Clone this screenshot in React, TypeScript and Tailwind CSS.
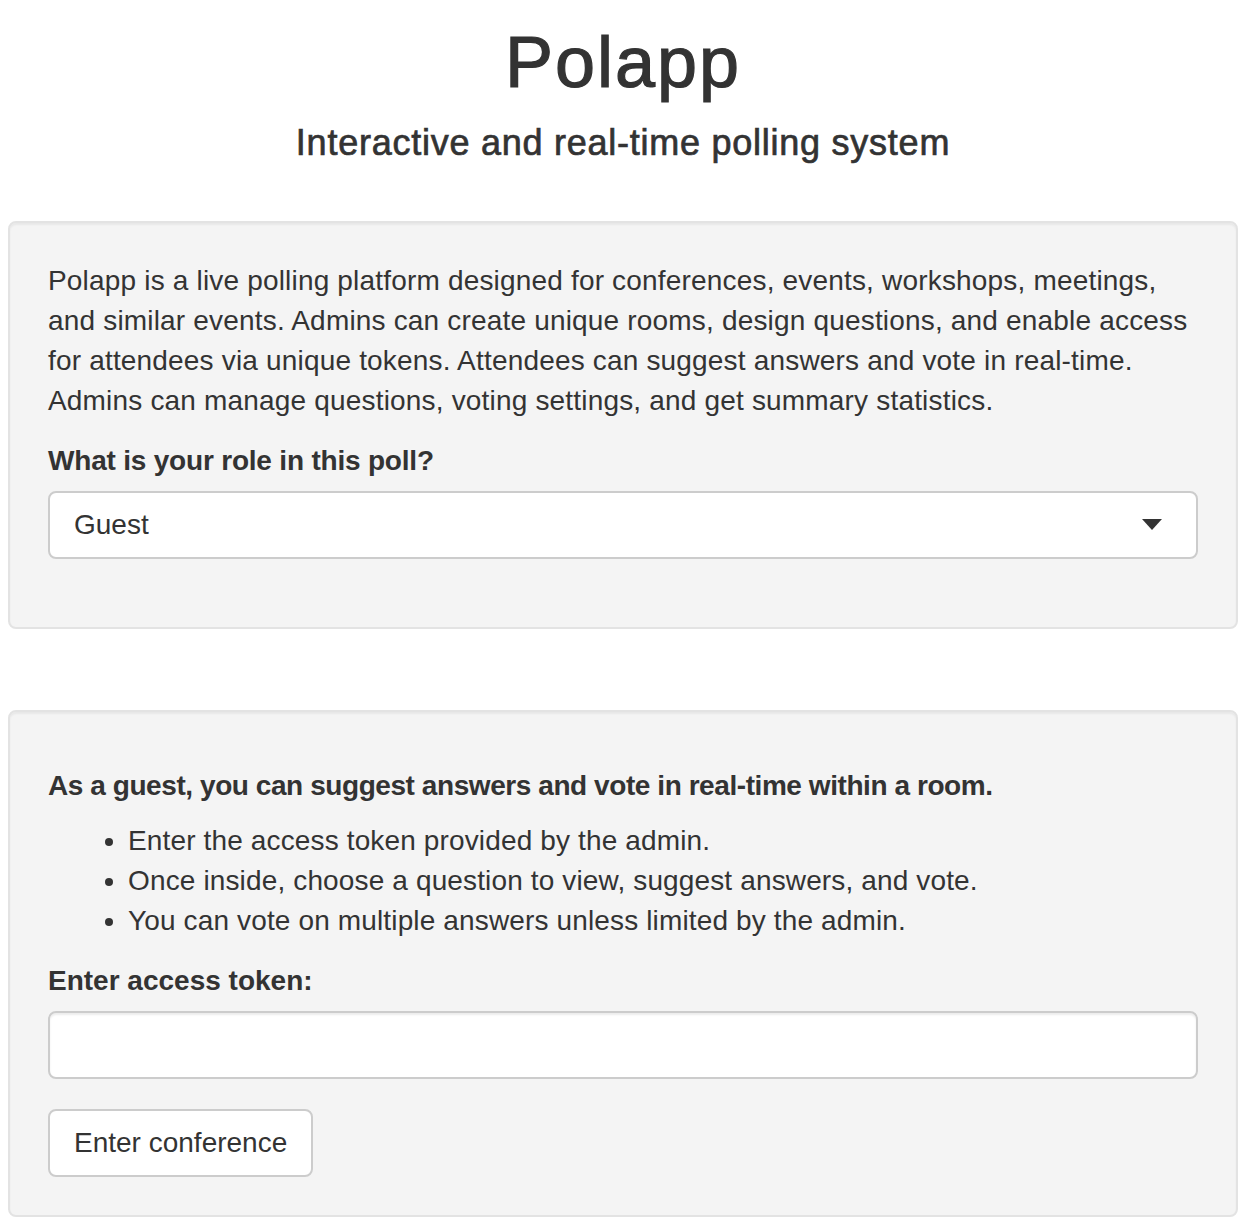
import { useState } from "react"

const font = { fontFamily: '"Liberation Sans", Arial, sans-serif' }

function Well({ children, className = "" }: { children: React.ReactNode; className?: string }) {
  return (
    <div
      className={`rounded-[8px] border-2 border-[#e3e3e3] bg-[#f4f4f4] px-[38px] py-[38px] shadow-[inset_0_2px_2px_rgba(0,0,0,0.05)] ${className}`}
    >
      {children}
    </div>
  )
}

export default function App() {
  const [role, setRole] = useState("Guest")
  const [token, setToken] = useState("")

  return (
    <div className="min-h-screen bg-white text-[#333] pl-2 pr-4" style={font}>
      {/* Title */}
      <div className="text-center">
        <h1 className="pt-[23px] text-[72px] leading-[79px] font-normal tracking-[2px] [-webkit-text-stroke:1.2px_#333]">
          Polapp
        </h1>
        <h4 className="mt-[21px] text-[36px] leading-[40px] font-normal tracking-[0.75px] [-webkit-text-stroke:0.7px_#333]">
          Interactive and real-time polling system
        </h4>
      </div>

      {/* Intro + role */}
      <Well className="mt-[58px]">
        <p className="text-[28px] leading-[40px] mb-[20px] tracking-[0.18px]">
          Polapp is a live polling platform designed for conferences, events, workshops, meetings,
          <br />
          and similar events. Admins can create unique rooms, design questions, and enable access
          <br />
          for attendees via unique tokens. Attendees can suggest answers and vote in real-time.
          <br />
          Admins can manage questions, voting settings, and get summary statistics.
        </p>
        <div className="mb-[30px]">
          <label className="block text-[28px] leading-[40px] font-bold mb-[10px] tracking-[-0.2px]">
            What is your role in this poll?
          </label>
          <div className="relative">
            <select
              value={role}
              onChange={(e) => setRole(e.target.value)}
              className="block w-full h-[68px] appearance-none rounded-[8px] border-2 border-[#ccc] bg-white px-[24px] text-[28px] text-[#333] outline-none"
              style={font}
            >
              <option>Guest</option>
              <option>Admin</option>
            </select>
            <svg
              className="pointer-events-none absolute right-[36px] top-[28px]"
              width="20"
              height="11"
              viewBox="0 0 20 11"
            >
              <path d="M0 0 L20 0 L10 11 Z" fill="#333" />
            </svg>
          </div>
        </div>
      </Well>

      {/* Guest instructions */}
      <Well className="mt-[81px]">
        <p className="mt-[16px] text-[28px] leading-[40px] font-bold tracking-[-0.43px]">
          As a guest, you can suggest answers and vote in real-time within a room.
        </p>
        <ul className="mt-[15px] mb-[20px] list-disc pl-[80px] text-[28px] leading-[40px] tracking-[0.14px]">
          <li>Enter the access token provided by the admin.</li>
          <li>Once inside, choose a question to view, suggest answers, and vote.</li>
          <li>You can vote on multiple answers unless limited by the admin.</li>
        </ul>
        <div className="mb-[30px]">
          <label className="block text-[28px] leading-[40px] font-bold mb-[10px]">Enter access token:</label>
          <input
            value={token}
            onChange={(e) => setToken(e.target.value)}
            className="block w-full h-[68px] rounded-[8px] border-2 border-[#ccc] bg-white px-[24px] text-[28px] outline-none shadow-[inset_0_2px_2px_rgba(0,0,0,0.075)]"
            style={font}
          />
        </div>
        <button
          className="h-[68px] rounded-[8px] border-2 border-[#ccc] bg-white px-[24px] text-[28px] text-[#333]"
          style={font}
        >
          Enter conference
        </button>
      </Well>
    </div>
  )
}
